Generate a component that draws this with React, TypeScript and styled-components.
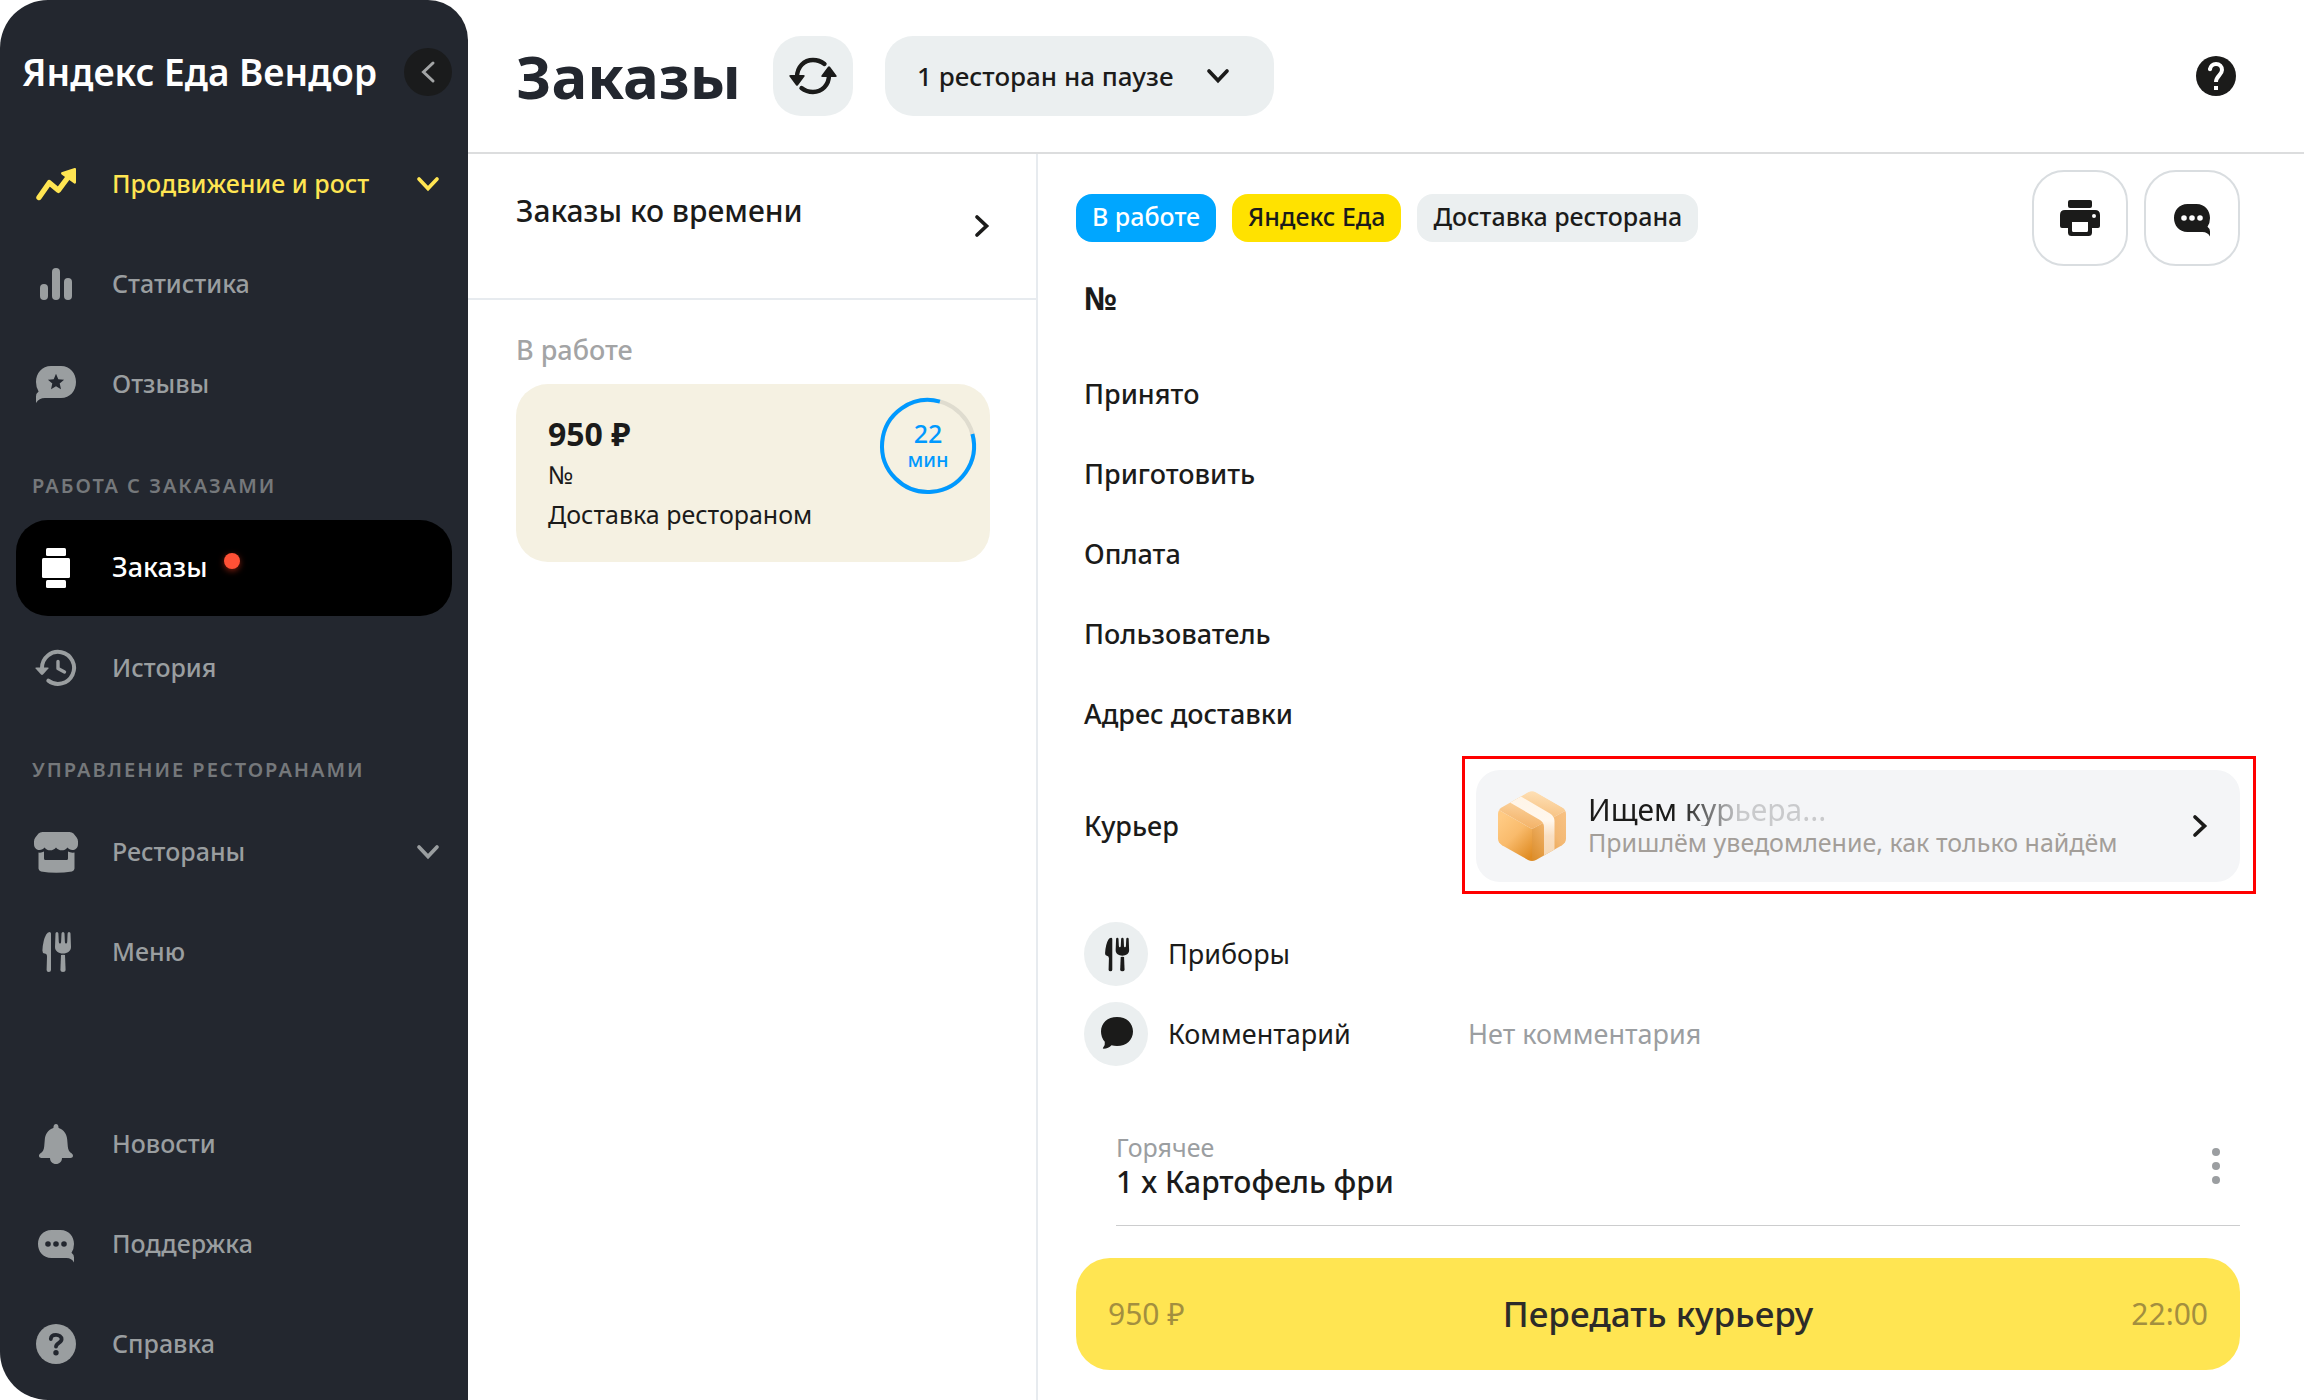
import React from 'react';
import styled, { createGlobalStyle } from 'styled-components';

const color = {
  ink: '#1b1b1a',
  slate: '#23272f',
  navText: '#9a9ea0',
  navLabel: '#75787b',
  muted: '#9b9ea1',
  yellow: '#ffe552',
  blue: '#0099ff',
  soft: '#ebeff0',
  line: '#e7ebef',
};

const GlobalStyle = createGlobalStyle`
  *, *::before, *::after { box-sizing: border-box; }
  body {
    margin: 0;
    background: #fff;
    color: ${color.ink};
    font-family: "Noto Sans", "Open Sans", sans-serif;
    font-size: 27px;
    font-weight: 500;
    line-height: 40px;
  }
  h1, h2, p, dl, dt, dd, ul { margin: 0; padding: 0; }
  ul { list-style: none; }
  button, select { font: inherit; color: inherit; border: 0; padding: 0; margin: 0; cursor: pointer; }
  a { color: inherit; text-decoration: none; }
  svg { display: block; flex: none; overflow: visible; }
`;

/* ---------- icons ---------- */

const Glyph = ({ size = 44, children }: { size?: number; children: React.ReactNode }) => (
  <svg width={size} height={size} viewBox="-2 -2 44 44" fill="currentColor" aria-hidden="true">
    {children}
  </svg>
);

const TrendIcon = () => (
  <Glyph>
    <path d="M3 33.5 13.3 18.7 22.3 26.3 33 12" fill="none" stroke="currentColor" strokeWidth="5.4" strokeLinecap="round" strokeLinejoin="round" />
    <path d="M25.5 8.2 38.6 4.1Q40 3.8 40 5.2V18.6Q39.6 20.4 38.2 19.4L25.6 10.4Q24.4 9 25.5 8.2Z" />
  </Glyph>
);

const StatsIcon = () => (
  <Glyph>
    <rect x="4" y="20" width="8" height="16" rx="4" />
    <rect x="16" y="4" width="8" height="32" rx="4" />
    <rect x="28" y="14" width="8" height="22" rx="4" />
  </Glyph>
);

const ReviewIcon = () => (
  <Glyph>
    <path
      fillRule="evenodd"
      d="M15 2H25C34 2 40 9 40 18S34 34 25 34H9C5 34 2 35.500 0 39V32.500Q0 29.500 2.600 27.600Q0 23.500 0 18C0 9 6 2 15 2ZM20 9.800 17.700 15.200 11.900 15.700 16.300 19.600 15 25.300 20 22.300 25 25.300 23.700 19.600 28.100 15.700 22.300 15.200Z"
    />
  </Glyph>
);

const OrdersIcon = () => (
  <Glyph>
    <rect x="10" y="0" width="20" height="8" rx="1.500" />
    <rect x="6" y="10" width="28" height="20" rx="1.500" />
    <rect x="10" y="32" width="20" height="8" rx="1.500" />
  </Glyph>
);

const HistoryIcon = () => (
  <Glyph>
    <path d="M6 20A16 16 0 1 1 12.300 32.600" fill="none" stroke="currentColor" strokeWidth="4" strokeLinecap="round" />
    <path d="M-.4 20.600Q-1.200 19.500 .3 19.500H11.700Q13.200 19.500 12.400 20.600L7 26.600Q6 27.500 5 26.600Z" />
    <path d="M22 13.500V20.500L28.500 24" fill="none" stroke="currentColor" strokeWidth="3.400" strokeLinecap="round" strokeLinejoin="round" />
  </Glyph>
);

const StoreIcon = () => (
  <Glyph>
    <path d="M6.500 0H33.500Q36 0 37.500 1.600L40.500 5.200Q42 7 42 9.500V12C42 19 34 19.500 31.500 15.500 28.500 19.500 22.500 19 20 15.500 17.500 19 11.500 19.500 8.500 15.500 6 19.500-2 19-2 12V9.500Q-2 7-.5 5.200L2.500 1.600Q4 0 6.500 0Z" />
    <path d="M2.500 20.500Q5.500 21 8 19.500V26.500Q8 28 9.500 28H30.500Q32 28 32 26.500V19.500Q34.500 21 38.500 20.500V36.500Q38.500 38.800 36 39.400 20 42 5 39.400 2.500 38.800 2.500 36.500Z" />
  </Glyph>
);

const CutleryIcon = ({ size }: { size?: number }) => (
  <Glyph size={size}>
    <path d="M13.500 0Q15 0 15 1.500V38Q15 40 12.800 40 10.600 40 10.600 38L11 24.500Q11 21.500 8.500 21.500 6.300 21 6.400 18.500 7 8 10.200 2.500 11.600 0 13.500 0Z" />
    <path d="M21 0Q22.300 0 22.400 1.500L22.800 10Q22.900 11.500 24 11.500 25 11.500 25.100 10L25.500 1.500Q25.600 0 27 0 28.400 0 28.500 1.500L28.900 10Q29 11.500 30 11.500 31.100 11.500 31.200 10L31.600 1.500Q31.700 0 33 0 34.500 0 34.500 1.500L35 15C35 19 31.500 21.500 27 21.500S19 19 19 15L19.500 1.500Q19.500 0 21 0Z" />
    <path d="M25 23Q27 22.500 29 23L29.600 38Q29.600 40 27 40 24.400 40 24.400 38Z" />
  </Glyph>
);

const BellIcon = () => (
  <Glyph>
    <path d="M20 0C21.800 0 22.400 1 22.600 4 28 6 30.800 10 31.200 15.500L31.800 22.500C32 26 33.500 28 35.500 29.300 38 31 37.200 34 34.500 34H26C26 37.500 23.500 40 20 40S14 37.500 14 34H5.500C2.800 34 2 31 4.500 29.300 6.500 28 8 26 8.200 22.500L8.800 15.500C9.200 10 12 6 17.400 4 17.600 1 18.200 0 20 0Z" />
  </Glyph>
);

const ChatIcon = () => (
  <Glyph>
    <path
      fillRule="evenodd"
      d="M15.500 6H24.500C33 6 38 12.500 38 20Q38 25 35.500 28.700 38 30.500 38 33.500V38.500C36.500 35.500 34 34 30.500 34H15.500C7 34 2 27.500 2 20S7 6 15.500 6ZM12 17.200A2.800 2.800 0 1 0 12 22.800 2.800 2.800 0 1 0 12 17.200ZM20 17.200A2.800 2.800 0 1 0 20 22.800 2.800 2.800 0 1 0 20 17.200ZM28 17.200A2.800 2.800 0 1 0 28 22.800 2.800 2.800 0 1 0 28 17.200Z"
    />
  </Glyph>
);

const SupportHelpIcon = () => (
  <Glyph>
    <circle cx="20" cy="20" r="20" />
    <path d="M14.800 15C15 12.300 17.200 10.900 20 10.900S25.600 12.600 25.600 15.300C25.600 19 20.200 18.600 20 22.600" fill="none" stroke={color.slate} strokeWidth="3.800" strokeLinecap="round" />
    <circle cx="20" cy="28.700" r="2.700" fill={color.slate} />
  </Glyph>
);

const HeaderHelpIcon = () => (
  <Glyph>
    <circle cx="20" cy="20" r="20" />
    <path d="M14 13.500C14.300 10 16.800 8 20 8 23.500 8 26 10.600 26 14 26 19 20 20 20 26" fill="none" stroke="#fff" strokeWidth="4" />
    <circle cx="14" cy="13.300" r="2" fill="#fff" />
    <rect x="18" y="30" width="4" height="4" fill="#fff" />
  </Glyph>
);

const PrinterIcon = () => (
  <Glyph>
    <rect x="8" y="2" width="24" height="8" rx="2" />
    <path
      fillRule="evenodd"
      d="M5 12H35Q40 12 40 17V28Q40 30 38 30H32V34.500Q32 38 28.500 38H11.500Q8 38 8 34.500V30H2Q0 30 0 28V17Q0 12 5 12ZM12 24V32.500Q12 34 13.500 34H26.500Q28 34 28 32.500V24ZM34 16A2 2 0 1 0 34 20 2 2 0 1 0 34 16Z"
    />
  </Glyph>
);

const CommentIcon = () => (
  <Glyph>
    <path d="M21 3C30.500 3 37 9 37 17.500S30.500 32 21 32Q18 32 15.500 31.200 12.500 34.500 7.500 34.800 6.300 34.600 7.200 33.600 9.400 31 8.800 27.800 5 23.500 5 17.500C5 9 11.500 3 21 3Z" />
  </Glyph>
);

const RefreshIcon = () => (
  <svg width="48" height="48" viewBox="0 0 48 48" fill="currentColor" aria-hidden="true">
    {[0, 180].map((turn) => (
      <g key={turn} transform={`rotate(${turn} 24 24)`}>
        <path d="M8 25C8 15 15 8 24 8Q30.500 8 35.500 12" fill="none" stroke="currentColor" strokeWidth="4.400" strokeLinecap="round" />
        <path d="M.7 24.700Q-.6 23 1.500 23H14.500Q16.600 23 15.300 24.700L9 33.300Q8 34.300 7 33.300Z" />
      </g>
    ))}
  </svg>
);

const turns = { down: 0, left: 90, up: 180, right: 270 };

const Chevron = ({ to, width = 24, stroke = 3.7 }: { to: keyof typeof turns; width?: number; stroke?: number }) => (
  <svg width={width} height={width} viewBox="0 0 24 24" aria-hidden="true">
    <path
      d="M3 7 12 16.500 21 7"
      transform={`rotate(${turns[to]} 12 12)`}
      fill="none"
      stroke="currentColor"
      strokeWidth={stroke}
      strokeLinecap="round"
    />
  </svg>
);

const ParcelIcon = () => (
  <svg width="68" height="70" viewBox="0 0 68 70" aria-hidden="true">
    <defs>
      <clipPath id="parcel-shape">
        <path d="M30 1.300Q34-.8 38 1.300L64 16.300Q68 18.800 68 23V47.500Q68 51.700 64 54.200L38 69Q34 71 30 69L4 54.200Q0 51.700 0 47.500V23Q0 18.800 4 16.300Z" />
      </clipPath>
      <linearGradient id="parcel-top" x1="0.700" y1="0" x2="0.500" y2="1">
        <stop offset="0" stopColor="#ffe3bb" />
        <stop offset="1" stopColor="#f3b267" />
      </linearGradient>
      <linearGradient id="parcel-front" x1="0.200" y1="0.100" x2="0.800" y2="1">
        <stop offset="0" stopColor="#ffca83" />
        <stop offset="0.450" stopColor="#f9bb6c" />
        <stop offset="1" stopColor="#df8b22" />
      </linearGradient>
      <linearGradient id="parcel-side" x1="0" y1="1" x2="1" y2="0">
        <stop offset="0" stopColor="#da8a25" />
        <stop offset="0.600" stopColor="#f3b873" />
        <stop offset="1" stopColor="#f8c285" />
      </linearGradient>
      <linearGradient id="parcel-tape" x1="0" y1="0" x2="0" y2="1">
        <stop offset="0" stopColor="#fff5e8" />
        <stop offset="0.400" stopColor="#fff7ed" />
        <stop offset="0.650" stopColor="#f9dfc2" />
        <stop offset="1" stopColor="#f6d7b2" />
      </linearGradient>
    </defs>
    <g clipPath="url(#parcel-shape)">
      <path d="M34-1 69 19 34 38-1 18Z" fill="url(#parcel-top)" />
      <path d="M-1 18 34 38V72H-1Z" fill="url(#parcel-front)" />
      <path d="M34 38 69 19V72H34Z" fill="url(#parcel-side)" />
      <path d="M12 11.500 23 5.500 52 22.500Q56.500 25.500 56.500 30V60L46 66V36Q46 31.500 42 29Z" fill="url(#parcel-tape)" />
    </g>
  </svg>
);

/* ---------- sidebar ---------- */

const Shell = styled.div`
  display: grid;
  grid-template-columns: 468px minmax(0, 1fr);
  min-height: 100vh;
`;

const Sidebar = styled.aside`
  display: flex;
  flex-direction: column;
  padding: 40px 16px 8px;
  background: ${color.slate};
  border-radius: 48px 40px 0 48px;
`;

const Brand = styled.div`
  display: flex;
  align-items: center;
  justify-content: space-between;
  height: 64px;
  margin-bottom: 32px;
  padding-left: 6px;
`;

const BrandName = styled.span`
  color: #fff;
  font-size: 37px;
  font-weight: 600;
  line-height: 48px;
  white-space: nowrap;
`;

const Collapse = styled.button`
  display: grid;
  place-items: center;
  flex: none;
  width: 48px;
  height: 48px;
  border-radius: 50%;
  background: #1a1b1c;
  color: #a3a5a6;
`;

const NavList = styled.ul<{ $bottom?: boolean }>`
  display: grid;
  gap: 4px;
  margin-top: ${(p) => (p.$bottom ? 'auto' : '0')};
`;

const NavTitle = styled.h2`
  height: 88px;
  padding: 38px 16px 0;
  color: ${color.navLabel};
  font-size: 20px;
  font-weight: 600;
  line-height: 32px;
  letter-spacing: 2px;
  text-transform: uppercase;
  white-space: nowrap;
`;

const NavLink = styled.a<{ $tone?: 'accent' | 'active' }>`
  display: flex;
  align-items: center;
  height: 96px;
  padding: 0 12px 0 18px;
  border-radius: 32px;
  background: ${(p) => (p.$tone === 'active' ? '#000' : 'transparent')};
  color: ${(p) => (p.$tone === 'active' ? '#fff' : p.$tone === 'accent' ? color.yellow : color.navText)};
  font-size: ${(p) => (p.$tone === 'active' ? '27px' : '25px')};
`;

const NavText = styled.span`
  display: flex;
  flex: 1;
  gap: 16px;
  padding: 0 0 2px 34px;
  white-space: nowrap;
`;

const Dot = styled.span`
  width: 16px;
  height: 16px;
  margin-top: 6px;
  border-radius: 50%;
  background: #ff5035;
  box-shadow: 0 2px 6px rgba(255, 60, 30, 0.5);
`;

/* ---------- header ---------- */

const Main = styled.main`
  display: grid;
  grid-template-rows: 154px minmax(0, 1fr);
`;

const Header = styled.header`
  display: flex;
  align-items: center;
  gap: 32px;
  padding: 0 66px 0 48px;
  border-bottom: 2px solid #dcddde;
`;

const PageTitle = styled.h1`
  color: ${color.slate};
  font-size: 60px;
  font-weight: 700;
  line-height: 80px;
`;

const RefreshButton = styled.button`
  display: grid;
  place-items: center;
  width: 80px;
  height: 80px;
  border-radius: 28px;
  background: ${color.soft};
`;

const PauseField = styled.label`
  display: grid;
  align-items: center;
  height: 80px;
  border-radius: 28px;
  background: ${color.soft};

  > * { grid-area: 1 / 1; }
  > svg { justify-self: end; margin-right: 44px; pointer-events: none; }
`;

const PauseSelect = styled.select`
  height: 80px;
  padding: 0 100px 0 32px;
  border-radius: 28px;
  background: transparent;
  font-size: 26px;
  appearance: none;
`;

const HelpButton = styled.button`
  margin-left: auto;
  background: none;
`;

/* ---------- order list ---------- */

const Columns = styled.div`
  display: grid;
  grid-template-columns: 570px minmax(0, 1fr);
`;

const OrderList = styled.section`
  border-right: 2px solid ${color.line};
`;

const Scheduled = styled.a`
  display: flex;
  align-items: center;
  justify-content: space-between;
  height: 146px;
  padding: 0 42px 0 48px;
  border-bottom: 2px solid ${color.line};
`;

const ScheduledText = styled.span`
  padding-bottom: 30px;
  font-size: 30px;
`;

const ListBody = styled.div`
  display: grid;
  gap: 14px;
  padding: 30px 46px 30px 48px;
`;

const ListTitle = styled.h2`
  color: #a3a4a5;
  font-size: 27px;
  font-weight: 500;
  line-height: 40px;
`;

const OrderCard = styled.a`
  display: flex;
  justify-content: space-between;
  padding: 14px 14px 28px 32px;
  border-radius: 32px;
  background: #f5f1e2;
  font-size: 25px;
  font-weight: 400;
`;

const OrderInfo = styled.div`
  padding-top: 16px;
`;

const OrderPrice = styled.p`
  font-size: 32px;
  font-weight: 700;
`;

const Timer = styled.div`
  display: grid;
  place-items: center;
  width: 96px;
  height: 96px;
  color: ${color.blue};

  > * { grid-area: 1 / 1; }
`;

const TimerText = styled.div`
  display: grid;
  justify-items: center;
`;

const TimerValue = styled.span`
  font-size: 25px;
  font-weight: 500;
  line-height: 28px;
`;

const TimerUnit = styled.span`
  font-size: 20px;
  font-weight: 500;
  line-height: 26px;
`;

/* ---------- order details ---------- */

const Details = styled.section`
  display: flex;
  flex-direction: column;
  padding: 16px 64px 30px 38px;
`;

const Toolbar = styled.div`
  display: flex;
  justify-content: space-between;
  gap: 16px;
`;

const TagRow = styled.div`
  display: flex;
  gap: 16px;
  padding-top: 24px;
`;

const tagTones = {
  blue: ['#00a6ff', '#fff'],
  yellow: ['#ffe200', color.ink],
  gray: [color.soft, color.ink],
};

const Tag = styled.span<{ $tone: keyof typeof tagTones }>`
  height: 48px;
  padding: 2px 16px 0;
  border-radius: 16px;
  background: ${(p) => tagTones[p.$tone][0]};
  color: ${(p) => tagTones[p.$tone][1]};
  font-size: 25px;
  white-space: nowrap;
`;

const ToolRow = styled.div`
  display: flex;
  gap: 16px;
`;

const ToolButton = styled.button`
  display: grid;
  place-items: center;
  width: 96px;
  height: 96px;
  border: 2px solid #d9dde0;
  border-radius: 32px;
  background: #fff;
`;

const OrderNumber = styled.h2`
  margin: 12px 0 36px;
  padding-left: 8px;
  font-size: 32px;
  font-weight: 700;
  line-height: 40px;
`;

const Facts = styled.dl`
  padding-left: 8px;
`;

const Fact = styled.div`
  display: grid;
  grid-template-columns: 384px minmax(0, 1fr);
  align-items: center;
  min-height: 80px;
`;

const CourierFact = styled(Fact)`
  grid-template-columns: 392px minmax(0, 1fr);
  margin: 16px 0 32px;
`;

const IconTerm = styled.dt`
  display: flex;
  align-items: center;
  gap: 20px;
  font-weight: 400;
`;

const IconDisc = styled.span`
  display: grid;
  place-items: center;
  width: 64px;
  height: 64px;
  border-radius: 50%;
  background: ${color.soft};
`;

const MutedValue = styled.dd`
  color: ${color.muted};
  font-weight: 400;
`;

const Highlighted = styled.dd`
  position: relative;

  &::after {
    content: "";
    position: absolute;
    inset: -14px -16px -12px -14px;
    border: 3px solid #f00;
    pointer-events: none;
  }
`;

const CourierCard = styled.button`
  display: flex;
  align-items: center;
  gap: 22px;
  width: 100%;
  height: 112px;
  padding: 0 28px 0 22px;
  border-radius: 24px;
  background: #f4f5f7;
  text-align: left;
  font-weight: 400;
`;

const CourierText = styled.span`
  display: grid;
  flex: 1;
  justify-items: start;
  line-height: 32px;
`;

const CourierStatus = styled.span`
  font-size: 30px;
  background: linear-gradient(90deg, ${color.ink} 38%, #c9cacc 64%);
  background-clip: text;
  -webkit-background-clip: text;
  color: transparent;
`;

const CourierNote = styled.span`
  color: #a39e99;
  font-size: 25px;
`;

const Dish = styled.article`
  display: flex;
  align-items: flex-end;
  justify-content: space-between;
  margin: auto 0 32px 40px;
  padding-bottom: 25px;
  border-bottom: 1px solid #cccdce;
`;

const DishGroup = styled.p`
  color: ${color.muted};
  font-size: 25px;
  font-weight: 400;
  line-height: 34px;
`;

const DishName = styled.h2`
  font-size: 30px;
  font-weight: 500;
  line-height: 36px;
`;

const MoreButton = styled.button`
  display: grid;
  place-items: center;
  width: 48px;
  height: 68px;
  background: none;
  color: ${color.muted};
`;

const HandOver = styled.button`
  display: grid;
  grid-template-columns: 1fr auto 1fr;
  align-items: center;
  height: 112px;
  padding: 0 32px;
  border-radius: 34px;
  background: ${color.yellow};
  color: #2d2b29;
  font-size: 35px;
`;

const HandOverNote = styled.span<{ $end?: boolean }>`
  color: #a38f3f;
  font-size: 30px;
  font-weight: 400;
  text-align: ${(p) => (p.$end ? 'right' : 'left')};
`;

/* ---------- page ---------- */

type NavEntry = {
  label: string;
  icon: React.ReactNode;
  tone?: 'accent' | 'active';
  expandable?: boolean;
  unread?: boolean;
};

const Nav = ({ items, bottom }: { items: NavEntry[]; bottom?: boolean }) => (
  <NavList $bottom={bottom}>
    {items.map((item) => (
      <li key={item.label}>
        <NavLink href="#" $tone={item.tone} aria-current={item.tone === 'active' ? 'page' : undefined}>
          {item.icon}
          <NavText>
            {item.label}
            {item.unread && <Dot />}
          </NavText>
          {item.expandable && <Chevron to="down" />}
        </NavLink>
      </li>
    ))}
  </NavList>
);

const growth: NavEntry[] = [
  { label: 'Продвижение и рост', icon: <TrendIcon />, tone: 'accent', expandable: true },
  { label: 'Статистика', icon: <StatsIcon /> },
  { label: 'Отзывы', icon: <ReviewIcon /> },
];

const orders: NavEntry[] = [
  { label: 'Заказы', icon: <OrdersIcon />, tone: 'active', unread: true },
  { label: 'История', icon: <HistoryIcon /> },
];

const restaurants: NavEntry[] = [
  { label: 'Рестораны', icon: <StoreIcon />, expandable: true },
  { label: 'Меню', icon: <CutleryIcon /> },
];

const service: NavEntry[] = [
  { label: 'Новости', icon: <BellIcon /> },
  { label: 'Поддержка', icon: <ChatIcon /> },
  { label: 'Справка', icon: <SupportHelpIcon /> },
];

const facts = ['Принято', 'Приготовить', 'Оплата', 'Пользователь', 'Адрес доставки'];

export default function App() {
  return (
    <>
      <GlobalStyle />
      <Shell>
        <Sidebar>
          <Brand>
            <BrandName>Яндекс Еда Вендор</BrandName>
            <Collapse aria-label="Свернуть меню">
              <Chevron to="left" stroke={3} />
            </Collapse>
          </Brand>
          <Nav items={growth} />
          <NavTitle>Работа с заказами</NavTitle>
          <Nav items={orders} />
          <NavTitle>Управление ресторанами</NavTitle>
          <Nav items={restaurants} />
          <Nav items={service} bottom />
        </Sidebar>

        <Main>
          <Header>
            <PageTitle>Заказы</PageTitle>
            <RefreshButton aria-label="Обновить">
              <RefreshIcon />
            </RefreshButton>
            <PauseField>
              <PauseSelect aria-label="Статус ресторанов">
                <option>1 ресторан на паузе</option>
              </PauseSelect>
              <Chevron to="down" />
            </PauseField>
            <HelpButton aria-label="Помощь">
              <HeaderHelpIcon />
            </HelpButton>
          </Header>

          <Columns>
            <OrderList>
              <Scheduled href="#">
                <ScheduledText>Заказы ко времени</ScheduledText>
                <Chevron to="right" />
              </Scheduled>
              <ListBody>
                <ListTitle>В работе</ListTitle>
                <OrderCard href="#">
                  <OrderInfo>
                    <OrderPrice>950 ₽</OrderPrice>
                    <p>№</p>
                    <p>Доставка рестораном</p>
                  </OrderInfo>
                  <Timer>
                    <svg width="96" height="96" viewBox="0 0 96 96" fill="none" strokeWidth="4" aria-hidden="true">
                      <circle cx="48" cy="48" r="46" stroke="#dfdccf" />
                      <path d="M92.430 36.100A46 46 0 1 1 59.900 3.570" stroke={color.blue} />
                    </svg>
                    <TimerText>
                      <TimerValue>22</TimerValue>
                      <TimerUnit>мин</TimerUnit>
                    </TimerText>
                  </Timer>
                </OrderCard>
              </ListBody>
            </OrderList>

            <Details>
              <Toolbar>
                <TagRow>
                  <Tag $tone="blue">В работе</Tag>
                  <Tag $tone="yellow">Яндекс Еда</Tag>
                  <Tag $tone="gray">Доставка ресторана</Tag>
                </TagRow>
                <ToolRow>
                  <ToolButton aria-label="Печать">
                    <PrinterIcon />
                  </ToolButton>
                  <ToolButton aria-label="Чат">
                    <ChatIcon />
                  </ToolButton>
                </ToolRow>
              </Toolbar>

              <OrderNumber>№</OrderNumber>

              <Facts>
                {facts.map((name) => (
                  <Fact key={name}>
                    <dt>{name}</dt>
                    <dd />
                  </Fact>
                ))}
                <CourierFact>
                  <dt>Курьер</dt>
                  <Highlighted>
                    <CourierCard>
                      <ParcelIcon />
                      <CourierText>
                        <CourierStatus>Ищем курьера...</CourierStatus>
                        <CourierNote>Пришлём уведомление, как только найдём</CourierNote>
                      </CourierText>
                      <Chevron to="right" />
                    </CourierCard>
                  </Highlighted>
                </CourierFact>
                <Fact>
                  <IconTerm>
                    <IconDisc>
                      <CutleryIcon size={37} />
                    </IconDisc>
                    Приборы
                  </IconTerm>
                  <dd />
                </Fact>
                <Fact>
                  <IconTerm>
                    <IconDisc>
                      <CommentIcon />
                    </IconDisc>
                    Комментарий
                  </IconTerm>
                  <MutedValue>Нет комментария</MutedValue>
                </Fact>
              </Facts>

              <Dish>
                <div>
                  <DishGroup>Горячее</DishGroup>
                  <DishName>1 x Картофель фри</DishName>
                </div>
                <MoreButton aria-label="Ещё">
                  <svg width="8" height="36" viewBox="0 0 8 36" fill="currentColor" aria-hidden="true">
                    <circle cx="4" cy="4" r="4" />
                    <circle cx="4" cy="18" r="4" />
                    <circle cx="4" cy="32" r="4" />
                  </svg>
                </MoreButton>
              </Dish>

              <HandOver>
                <HandOverNote>950 ₽</HandOverNote>
                <span>Передать курьеру</span>
                <HandOverNote $end>22:00</HandOverNote>
              </HandOver>
            </Details>
          </Columns>
        </Main>
      </Shell>
    </>
  );
}
